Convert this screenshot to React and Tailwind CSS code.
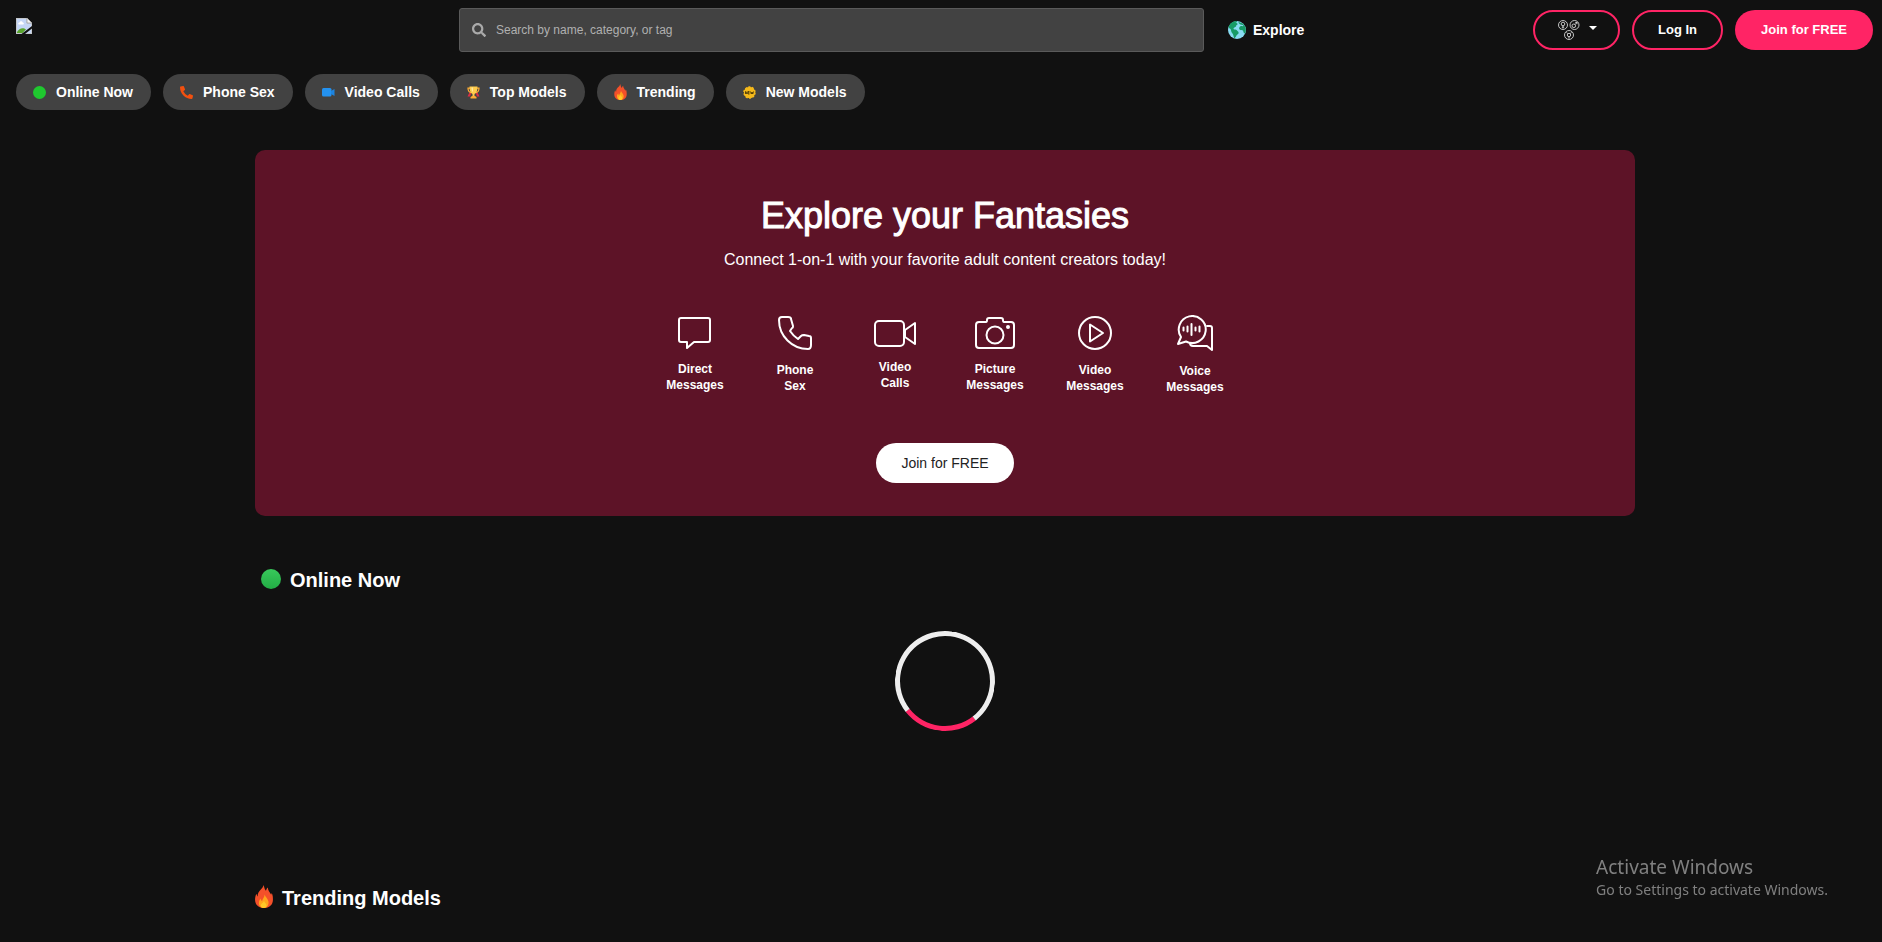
import { FaSearch, FaPhoneAlt } from "react-icons/fa";

function BrokenImage() {
  return (
    <svg width="16" height="16" viewBox="0 0 16 16" role="img" aria-label="Home">
      <path d="M0 0h11l5 5v11H0z" fill="#c3c7cc" />
      <path d="M1 1h9.500v4.500H15V15H1z" fill="#c5d6f6" />
      <path d="M3 6.500c-1 0-1.200-2 .5-2 .4-1.800 3-1.600 3.200 0 1.600 0 1.500 2 .3 2z" fill="#fff" />
      <path d="M1 15v-1c2-3.600 6-5.200 9-2.500L6.500 15z" fill="#5aa52e" />
      <path d="M11 0l5 5h-5z" fill="#f4f4f4" stroke="#9a9a9a" strokeWidth=".7" />
      <path d="M5.500 16L16 8v2.500L9 16z" fill="#111" />
    </svg>
  );
}

function Globe() {
  return (
    <svg width="18" height="18" viewBox="0 0 36 36" aria-hidden="true">
      <circle cx="18" cy="18" r="18" fill="#88dbf2" />
      <path
        d="M3 8C6 3 12 0 18 0c1 2-1 3-3 4 3 0 5 1 4 3-2 1-3 2-3 4-2 2-5 2-5 4 0 3 5 1 7 4 2 2 4 3 3 6-2 2-4 3-5 6-1 2-3 4-4 3-1-4-1-6-3-9-2-2-3-5-3-7-1-3-4-3-5-6z"
        fill="#179b66"
      />
      <path
        d="M21 2c7 1 12 5 14 11 1 4 1 8-1 12-3 0-3-3-4-6-2-1-5 0-7-2-2-3 0-6 3-7 2 0 4 1 5-1-2-2-6-1-8-3-1-1-2-2-2-4z"
        fill="#179b66"
      />
    </svg>
  );
}

function Trophy() {
  return (
    <svg width="13" height="13" viewBox="0 0 26 26" aria-hidden="true">
      <path d="M5 13h4l-3 8H1zM21 13h-4l3 8h5z" fill="#dd2e44" />
      <path d="M6 4H2c0 5 2 9 7 9M20 4h4c0 5-2 9-7 9" fill="none" stroke="#ffac33" strokeWidth="2.500" />
      <path d="M5 1h16c0 8-2 13-6 15v5h-4v-5C7 14 5 9 5 1z" fill="#ffcc4d" />
      <path d="M7 23c0-2 2-3 6-3s6 1 6 3v2H7z" fill="#ffac33" />
      <path d="M9 3h3v9c-2-1-3-4-3-9z" fill="#ffe8a0" />
    </svg>
  );
}

function Flame({ className }) {
  return (
    <svg className={className} viewBox="0 0 28 36" aria-hidden="true">
      <path
        d="M13 0c2 3 1 6 4 9 1-2 1-3 3-5 0 5 3 7 5 11 1-1 1-2 1-3 2 4 2 8 2 11 0 8-6 13-14 13S0 31 0 23c0-4 1-7 2-9 1 1 1 3 2 4 0-5 2-8 5-11 2-2 4-4 4-7z"
        fill="#f4502a"
      />
      <path d="M15 15c1 4 5 6 6 11 1 6-3 10-7 10s-8-3-8-8c0-3 1-5 3-7 0 2 0 3 2 4 1-4 4-6 4-10z" fill="#ffa51c" />
      <path d="M14 25c1 3 4 4 4 7 0 2-2 4-4 4s-5-1-5-4 4-4 5-7z" fill="#ffc928" />
    </svg>
  );
}

function NewBadge() {
  return (
    <svg width="13" height="13" viewBox="0 0 26 26" aria-hidden="true">
      <circle cx="13" cy="13" r="11" fill="#f5b91a" stroke="#f5b91a" strokeWidth="3" strokeDasharray="4 2.900" />
      <circle cx="13" cy="13" r="11" fill="#f5b91a" />
      <path d="M5 16v-5l3 5v-5M13 11h-3v5h3M10 13.500h3M15 11l1.500 5 1.500-4 1.500 4 1.500-5" fill="none" stroke="#3b2d05" strokeWidth="1.600" />
    </svg>
  );
}

function VideoIcon() {
  return (
    <svg width="13" height="9" viewBox="0 0 26 18" aria-hidden="true">
      <rect width="19" height="17" rx="3" fill="#2492f0" />
      <path d="M18 6l7-4v14l-7-4z" fill="#1c84e0" />
    </svg>
  );
}

function OrientationIcon() {
  return (
    <svg width="24" height="22" viewBox="0 0 24 22" fill="none" stroke="#d6d6d6" strokeWidth=".9" aria-hidden="true">
      <circle cx="6" cy="6" r="4.500" />
      <circle cx="6" cy="5" r="1.800" />
      <path d="M6 6.800v2.700M4.800 8.200h2.400" />
      <circle cx="17.500" cy="6" r="4.500" />
      <circle cx="16.800" cy="6.800" r="1.800" />
      <path d="M18 5.500l2-2M18.300 3.500H20v1.700" />
      <circle cx="12" cy="16" r="4.500" />
      <circle cx="12" cy="16" r="1.700" />
      <path d="M10.800 14.700L9.500 13.300M13.200 14.700l1.300-1.400M12 17.700v2" />
    </svg>
  );
}

const line = { fill: "none", stroke: "#fff", strokeWidth: 2, strokeLinejoin: "round", strokeLinecap: "round" };

const features = [
  {
    label: ["Direct", "Messages"],
    icon: (
      <svg width="34" height="32" viewBox="0 0 34 32" {...line}>
        <path d="M3 1h27a2 2 0 0 1 2 2v20a2 2 0 0 1-2 2H16l-7 6v-6H3a2 2 0 0 1-2-2V3a2 2 0 0 1 2-2z" />
      </svg>
    ),
  },
  {
    label: ["Phone", "Sex"],
    icon: (
      <svg width="34" height="34" viewBox="0 0 34 34" {...line}>
        <path d="M4 1h6c2 0 3 1 3 2l2 7c0 1 0 2-1 2l-2 3c2 3 5 6 8 8l3-3c1-1 2-1 3-1l5 1c1 0 2 1 2 2v7c0 2-1 4-3 4C14 33 1 20 1 4c0-2 1-3 3-3z" />
      </svg>
    ),
  },
  {
    label: ["Video", "Calls"],
    icon: (
      <svg width="42" height="27" viewBox="0 0 42 27" {...line}>
        <rect x="1" y="1" width="29" height="25" rx="4" />
        <path d="M31 10l10-7v21l-10-7z" />
      </svg>
    ),
  },
  {
    label: ["Picture", "Messages"],
    icon: (
      <svg width="40" height="32" viewBox="0 0 40 32" {...line}>
        <path d="M4 5h7c1 0 1-1 1-2 0-1 1-2 2-2h12c1 0 2 1 2 2 0 1 0 2 1 2h7a3 3 0 0 1 3 3v20a3 3 0 0 1-3 3H4a3 3 0 0 1-3-3V8a3 3 0 0 1 3-3z" />
        <circle cx="20" cy="18" r="8.500" />
        <circle cx="33" cy="10" r="1" fill="#fff" />
      </svg>
    ),
  },
  {
    label: ["Video", "Messages"],
    icon: (
      <svg width="34" height="34" viewBox="0 0 34 34" {...line}>
        <circle cx="17" cy="17" r="16" />
        <path d="M12 8.500v17L25 17z" />
      </svg>
    ),
  },
  {
    label: ["Voice", "Messages"],
    icon: (
      <svg width="36" height="36" viewBox="0 0 36 36" {...line}>
        <path d="M4 22a13.500 13.500 0 1 1 5 4.500L1 29z" />
        <path d="M30 11h3c1 0 2 1 2 2v22l-5-4H16c-2 0-3-1-3-3" />
        <path d="M6.500 12.500v3M10.500 11.500v5M14.500 9v11M18.500 12.500v3M22.500 11.500v5" />
      </svg>
    ),
  },
];

const categories = [
  { name: "Online Now", icon: <span className="size-[13px] rounded-full bg-[#1fc82f]" /> },
  { name: "Phone Sex", icon: <FaPhoneAlt size={13} color="#f2500f" /> },
  { name: "Video Calls", icon: <VideoIcon /> },
  { name: "Top Models", icon: <Trophy /> },
  { name: "Trending", icon: <Flame className="h-4 w-[13px]" /> },
  { name: "New Models", icon: <NewBadge /> },
];

function Header() {
  return (
    <header>
      <div className="flex h-[60px] items-center pr-[9px] pl-4">
        <a href="#" className="mb-2 w-[443px] shrink">
          <BrokenImage />
        </a>
        <label className="flex h-11 max-w-[745px] flex-1 items-center gap-[10px] rounded-[3px] border border-[#5a5a5a] bg-[#424242] px-3">
          <FaSearch size={14} color="#aaa" />
          <input
            type="search"
            aria-label="Search"
            placeholder="Search by name, category, or tag"
            className="h-full flex-1 bg-transparent text-[12px] text-white outline-none placeholder:text-[#b0b0b0]"
          />
        </label>
        <a href="#" className="ml-6 flex items-center gap-[7px] text-[14px] font-bold">
          <Globe />
          Explore
        </a>
        <div className="ml-auto flex gap-3 text-[13px] font-bold">
          <button
            aria-label="Orientation"
            className="flex h-10 w-[87px] items-center justify-center gap-2 rounded-full border-2 border-[#ff2465]"
          >
            <OrientationIcon />
            <svg width="8" height="4" viewBox="0 0 8 4" className="mb-1" aria-hidden="true">
              <path d="M0 0h8L4 4z" fill="#fff" />
            </svg>
          </button>
          <button className="h-10 rounded-full border-2 border-[#ff2465] px-6">Log In</button>
          <button className="h-10 rounded-full bg-[#ff2465] px-[26px]">Join for FREE</button>
        </div>
      </div>
      <nav className="flex flex-wrap gap-3 px-4 pt-[14px]">
        {categories.map((c) => (
          <a key={c.name} href="#" className="flex h-9 items-center gap-[10px] rounded-full bg-[#424242] pr-[18px] pl-[17px] text-[14px] font-bold">
            {c.icon}
            {c.name}
          </a>
        ))}
      </nav>
    </header>
  );
}

function Banner() {
  return (
    <section className="flex flex-col items-center rounded-[10px] bg-[#5d1327] pt-11 pb-[33px]">
      <h1 className="text-[36px] leading-[44px] [-webkit-text-stroke:1px_#fff]">Explore your Fantasies</h1>
      <p className="mt-2 text-[16px] leading-7">Connect 1-on-1 with your favorite adult content creators today!</p>
      <ul className="mt-[41px] flex items-center">
        {features.map((f) => (
          <li key={f.label.join(" ")} className="flex w-[100px] flex-col items-center gap-3 text-center text-[12px] leading-4 font-bold">
            {f.icon}
            <span>
              {f.label[0]}
              <br />
              {f.label[1]}
            </span>
          </li>
        ))}
      </ul>
      <button className="mt-12 h-10 rounded-full bg-white px-[25px] text-[14px] text-[#222]">Join for FREE</button>
    </section>
  );
}

export default function App() {
  return (
    <div className="min-h-screen bg-[#111] font-['Liberation_Sans',Arial,sans-serif] text-white">
      <Header />
      <main className="ml-2 px-4 pt-10">
        <div className="mx-auto max-w-[1380px]">
          <Banner />
          <section className="pt-[50px]">
            <h2 className="flex items-center gap-[9px] pl-[6px] text-[20px] leading-7 font-bold">
              <span className="mb-[3px] size-5 rounded-full bg-linear-to-b from-[#38c95b] to-[#22ad45]" />
              Online Now
            </h2>
            <div className="flex h-[254px] justify-center pt-[37px]">
              <div
                role="status"
                aria-label="Loading"
                className="size-[100px] rotate-[7deg] rounded-full border-[5px] border-[#eee] border-b-[#ff2465]"
              />
            </div>
          </section>
          <section className="pt-9">
            <h2 className="flex items-center gap-[9px] text-[20px] leading-7 font-bold">
              <Flame className="mb-[3px] h-[23px] w-[18px]" />
              Trending Models
            </h2>
          </section>
        </div>
      </main>
      <aside className="pointer-events-none fixed right-[54px] bottom-[41px] font-['Noto_Sans',sans-serif] text-[#808080]">
        <p className="text-[19px] leading-6">Activate Windows</p>
        <p className="text-[14px] leading-[22px]">Go to Settings to activate Windows.</p>
      </aside>
    </div>
  );
}
